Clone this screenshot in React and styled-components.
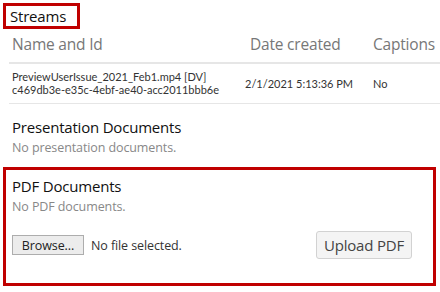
import React from 'react'
import styled, { createGlobalStyle } from 'styled-components'

const GlobalStyle = createGlobalStyle`
  body {
    margin: 0;
    background: #fff;
    font-family: "Open Sans", "Noto Sans", sans-serif;
    color: #222;
  }
`

const Page = styled.div`
  width: 440px;
  height: 292px;
  padding: 3px 0 0 3px;
  box-sizing: border-box;
  overflow: hidden;
`

const Highlight = styled.div`
  border: 3px solid #c00000;
  box-sizing: border-box;
  ${p => p.$block ? `
    width: 433px;
    height: 119px;
    padding: 6px 6px;
  ` : `
    display: inline-block;
    padding: 0 11px 0 4px;
    height: 26px;
  `}
`

const Title = styled.h2`
  margin: 0;
  font-weight: 400;
  font-size: 15px;
  line-height: 20px;
  letter-spacing: -0.2px;
  color: #111;
`

const Table = styled.div`
  display: grid;
  grid-template-columns: 236px 128px 1fr;
  margin: 0 0 0 6px;
`

const HeadCell = styled.div`
  font-size: 15.5px;
  line-height: 22px;
  letter-spacing: -0.2px;
  color: #777;
  padding: 4px 0 7px;
  padding-left: ${p => p.$indent ?? 3}px;
  border-bottom: 2px solid #e6e6e6;
  white-space: nowrap;
`

const Cell = styled.div`
  font-family: Lato, "Open Sans", sans-serif;
  font-size: 11px;
  line-height: 13.2px;
  white-space: nowrap;
  color: #333;
  padding: 6px 0 7px;
  padding-left: ${p => p.$indent ?? 3}px;
  border-bottom: 1px solid #e6e6e6;
  display: flex;
  align-items: center;
`

const Section = styled.div`
  padding: 13px 0 0 9px;
`

const Empty = styled.p`
  margin: ${p => p.$gap ?? 3}px 0 0;
  font-size: 12.5px;
  line-height: 16px;
  color: #888;
  letter-spacing: -0.1px;
`

const UploadRow = styled.div`
  display: flex;
  align-items: center;
  margin-top: 16px;
  padding: 0 15px 0 0;
`

const Browse = styled.button`
  font-family: inherit;
  font-size: 12.5px;
  height: 20px;
  width: 72px;
  padding: 0;
  background: #ececec;
  border: 1px solid #adadad;
  border-radius: 0;
  color: #222;
  letter-spacing: -0.1px;
`

const FileName = styled.span`
  font-size: 12.5px;
  color: #333;
  margin-left: 7px;
  letter-spacing: -0.1px;
`

const Upload = styled.button`
  margin-left: auto;
  font-family: inherit;
  font-size: 15px;
  letter-spacing: -0.2px;
  height: 28px;
  width: 96px;
  padding: 0;
  background: #f4f4f4;
  border: 1px solid #d2d2d2;
  border-radius: 3px;
  color: #444;
`

const PdfWrap = styled.div`
  margin-top: 11px;
`

export default function App() {
  return (
    <Page>
      <GlobalStyle />
      <Highlight>
        <Title>Streams</Title>
      </Highlight>
      <Table>
        <HeadCell>Name and Id</HeadCell>
        <HeadCell $indent={5}>Date created</HeadCell>
        <HeadCell $indent={0}>Captions</HeadCell>
        <Cell>
          <div>
            PreviewUserIssue_2021_Feb1.mp4 [DV]<br />
            c469db3e-e35c-4ebf-ae40-acc2011bbb6e
          </div>
        </Cell>
        <Cell $indent={0}>2/1/2021 5:13:36 PM</Cell>
        <Cell $indent={0}>No</Cell>
      </Table>
      <Section>
        <Title>Presentation Documents</Title>
        <Empty>No presentation documents.</Empty>
      </Section>
      <PdfWrap>
        <Highlight $block>
          <Title>PDF Documents</Title>
          <Empty $gap={3}>No PDF documents.</Empty>
          <UploadRow>
            <Browse>Browse...</Browse>
            <FileName>No file selected.</FileName>
            <Upload>Upload PDF</Upload>
          </UploadRow>
        </Highlight>
      </PdfWrap>
    </Page>
  )
}
